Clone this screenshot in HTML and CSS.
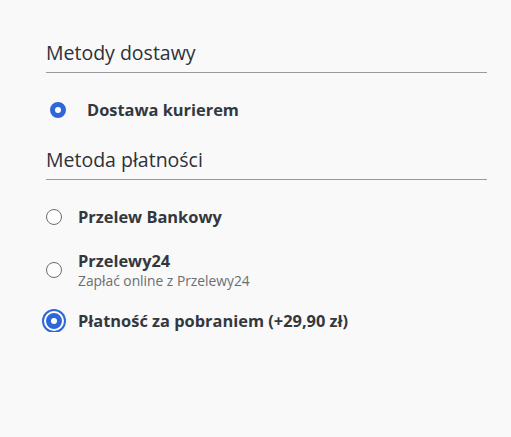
FILE: index.html
```html
<!DOCTYPE html>
<html lang="pl">
<head>
<meta charset="utf-8">
<link rel="stylesheet" href="styles.css">
</head>
<body>
<div class="checkout">
  <section class="group">
    <h2 class="group-title">Metody dostawy</h2>
    <div class="options options-shipping">
      <label class="option">
        <span class="radio radio-checked"></span>
        <span class="option-text"><span class="option-name">Dostawa kurierem</span></span>
      </label>
    </div>
  </section>
  <section class="group">
    <h2 class="group-title">Metoda płatności</h2>
    <div class="options options-payment">
      <label class="option">
        <span class="radio"></span>
        <span class="option-text"><span class="option-name">Przelew Bankowy</span></span>
      </label>
      <label class="option option-desc-row">
        <span class="radio"></span>
        <span class="option-text">
          <span class="option-name">Przelewy24</span>
          <span class="option-desc">Zapłać online z Przelewy24</span>
        </span>
      </label>
      <label class="option">
        <span class="radio radio-focus"></span>
        <span class="option-text"><span class="option-name">Płatność za pobraniem (+29,90 zł)</span></span>
      </label>
    </div>
  </section>
</div>
</body>
</html>
```
FILE: styles.css
```css
html, body {
  margin: 0;
  padding: 0;
  background: #f9f9f9;
}
body {
  font-family: "Open Sans", Lato, sans-serif;
  color: #333840;
}
.checkout {
  padding: 40px 24px 0 46px;
}
.group-title {
  margin: 0;
  font-size: 19.5px;
  font-weight: 400;
  line-height: 26px;
  color: #2d3138;
  padding-bottom: 6px;
  border-bottom: 1px solid #9a9a9e;
}
.options {
  display: flex;
  flex-direction: column;
}
.options-shipping {
  padding: 26px 0 26px 4px;
}
.options-payment {
  padding: 26px 0 0 0;
  gap: 21px;
}
.option {
  display: flex;
  align-items: center;
  gap: 16px;
}
.option-desc-row {
  margin-top: 1px;
}
.options-shipping .option {
  gap: 21px;
}
.radio {
  flex: none;
  width: 16px;
  height: 16px;
  box-sizing: border-box;
  border-radius: 50%;
  border: 1px solid #6b6b6b;
  background: #fff;
}
.radio-checked {
  border: 5px solid #2f66d8;
  background: #fff;
}
.radio-focus {
  border: 5px solid #2f66d8;
  background: #fff;
  box-shadow: 0 0 0 2px #fff, 0 0 0 4px #2f66d8;
}
.option-text {
  display: flex;
  flex-direction: column;
}
.option-name {
  font-weight: 700;
  font-size: 16.4px;
  line-height: 22px;
  color: #333840;
}
.option-desc {
  font-size: 13.8px;
  line-height: 17px;
  color: #6b6e73;
}
```
